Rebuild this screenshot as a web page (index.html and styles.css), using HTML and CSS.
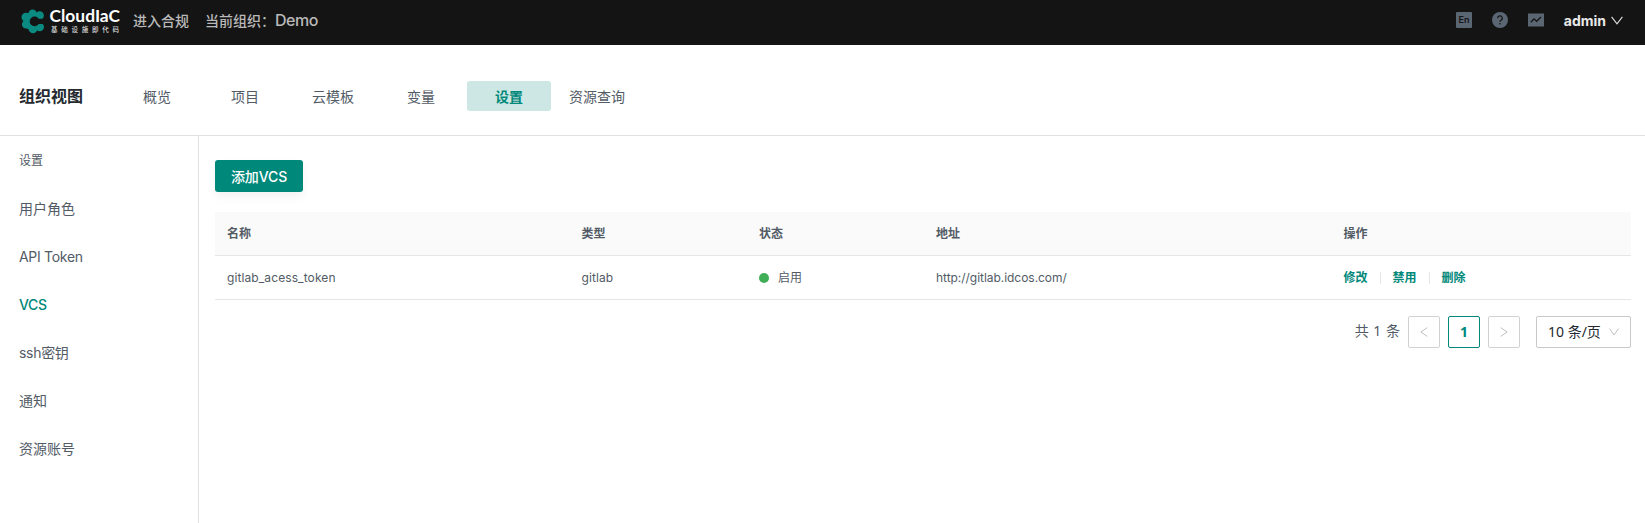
FILE: index.html
```html
<!DOCTYPE html>
<html lang="zh-CN">
<head>
<meta charset="utf-8">
<title>CloudIaC</title>
<link rel="stylesheet" href="styles.css">
</head>
<body>
<header class="topbar">
  <svg class="logo" width="102" height="28" viewBox="0 0 102 28">
    <g fill="#0a8a80"><circle cx="12" cy="14.4" r="9.4"/><circle cx="11.6" cy="6.6" r="4.2"/><circle cx="4.9" cy="10.2" r="4.4"/><circle cx="5.1" cy="17.4" r="4.2"/><circle cx="12" cy="22" r="4.3"/><circle cx="18.6" cy="8.6" r="4.3"/><circle cx="18.7" cy="20" r="4.3"/></g>
    <circle cx="13.6" cy="14.4" r="4.9" fill="#141414"/>
    <path d="M15 11.8h10v5.2H15z" fill="#141414"/>
    <text class="logo-name" x="28.5" y="15.2" textLength="70.5" lengthAdjust="spacingAndGlyphs">CloudIaC</text>
    <text class="logo-sub" x="30" y="25" textLength="68">基础设施即代码</text>
  </svg>
  <a class="top-link">进入合规</a>
  <div class="top-org">当前组织：<span class="org-name">Demo</span></div>
  <div class="top-tools">
    <svg width="16" height="16" viewBox="0 0 16 16"><rect width="16" height="16" rx="1" fill="#5a6672"/><text class="en" x="8" y="11.3" text-anchor="middle">En</text></svg>
    <svg width="16" height="16" viewBox="0 0 16 16"><circle cx="8" cy="8" r="8" fill="#5a6672"/><path d="M5.7 6.3A2.3 2.3 0 1 1 9 8.2Q8 8.7 8 9.8" fill="none" stroke="#141414" stroke-width="1.2"/><circle cx="8" cy="11.8" r=".8" fill="#141414"/></svg>
    <svg width="16" height="16" viewBox="0 0 16 16"><path fill="#5a6672" d="M0 1.5h16v13H0z"/><path d="M2.8 10.2 6 6.8 8.6 9.3 13 5" fill="none" stroke="#141414" stroke-width="1.3"/></svg>
    <div class="user">admin<svg width="12" height="9" viewBox="0 0 12 9"><path d="M.6.8 6 7.8 11.4.8" fill="none" stroke="#e0e0e0" stroke-width="1.1"/></svg></div>
  </div>
</header>
<nav class="nav">
  <h1 class="nav-title">组织视图</h1>
  <a class="nav-item">概览</a>
  <a class="nav-item">项目</a>
  <a class="nav-item">云模板</a>
  <a class="nav-item">变量</a>
  <a class="nav-item active">设置</a>
  <a class="nav-item">资源查询</a>
</nav>
<div class="body">
  <aside class="side">
    <div class="side-title">设置</div>
    <a class="side-item">用户角色</a>
    <a class="side-item latin">API Token</a>
    <a class="side-item active">VCS</a>
    <a class="side-item latin">ssh密钥</a>
    <a class="side-item">通知</a>
    <a class="side-item">资源账号</a>
  </aside>
  <main class="main">
    <button class="add">添加VCS</button>
    <div class="table">
      <div class="row head"><div>名称</div><div>类型</div><div>状态</div><div>地址</div><div>操作</div></div>
      <div class="row">
        <div class="name">gitlab_acess_token</div><div class="name">gitlab</div>
        <div class="status"><i class="dot"></i>启用</div>
        <div class="url">http://gitlab.idcos.com/</div>
        <div class="actions"><a>修改</a><i class="sep"></i><a>禁用</a><i class="sep"></i><a>删除</a></div>
      </div>
    </div>
    <div class="pager">
      <span class="total">共 1 条</span>
      <span class="page"><svg width="8" height="10" viewBox="0 0 8 10"><path d="M7.3.6.9 5l6.4 4.4" fill="none" stroke="#bfbfbf"/></svg></span>
      <span class="page current">1</span>
      <span class="page"><svg width="8" height="10" viewBox="0 0 8 10"><path d="M.7.6 7.1 5 .7 9.4" fill="none" stroke="#bfbfbf"/></svg></span>
      <span class="size">10 条/页<svg width="10" height="8" viewBox="0 0 10 8"><path d="M.5.6 5 7 9.5.6" fill="none" stroke="#bfbfbf"/></svg></span>
    </div>
  </main>
</div>
</body>
</html>
```
FILE: styles.css
```css
* { box-sizing: border-box; }
body {
  margin: 0;
  height: 523px;
  display: flex;
  flex-direction: column;
  background: #fff;
  color: #525b66;
  font: 14px/22px Inter, "Noto Sans CJK SC", sans-serif;
  overflow: hidden;
}
svg { display: block; flex: none; overflow: visible; }
.topbar {
  height: 45px;
  flex: none;
  display: flex;
  align-items: center;
  padding: 0 22px 4px 21px;
  background: #141414;
  color: #b9b9b9;
  font-weight: 500;
}
.logo-name { font: 700 17px Lato, sans-serif; fill: #fff; }
.logo-sub { font: 500 6.5px "Noto Sans CJK SC", sans-serif; fill: #ddd; }
.en { font: 600 9px Inter, sans-serif; fill: #141414; }
.top-link { margin-left: 10px; }
.top-org { display: flex; margin-left: 16px; }
.org-name { font-size: 16px; font-weight: 500; letter-spacing: -.5px; line-height: 21px; }
.top-tools { display: flex; align-items: center; gap: 20px; margin-left: auto; }
.top-tools > svg { margin-bottom: 1px; }
.user { display: flex; align-items: center; gap: 5px; color: #e8e8e8; font-weight: 700; }
.nav {
  height: 91px;
  flex: none;
  display: flex;
  align-items: center;
  gap: 4px;
  padding: 11px 0 0 19px;
  border-bottom: 1px solid #e1e1e1;
}
.nav-title { margin: 0 28px 0 0; width: 64px; color: #24292f; font-size: 16px; font-weight: 700; }
.nav-item { width: 84px; height: 30px; line-height: 32px; border-radius: 3px; text-align: center; }
.nav-item.active { background: #cde7e4; color: #00887a; font-weight: 700; }
.body { flex: 1; display: flex; }
.side { width: 199px; padding: 14px 0 0 19px; border-right: 1px solid #e1e1e1; }
.side-title { font-size: 12px; line-height: 21px; }
.side-item { display: block; height: 48px; line-height: 48px; }
.side-title + .side-item { margin-top: 14px; }
.side-item.active { color: #00887a; font-weight: 500; letter-spacing: -.4px; }
.latin { letter-spacing: -.3px; }
.main { flex: 1; padding: 24px 14px 0 16px; }
.add {
  display: block;
  width: 88px;
  height: 32px;
  padding: 1px 0 0;
  border: 0;
  border-radius: 3px;
  background: #00887a;
  box-shadow: 0 5px 10px rgba(0, 0, 0, .05);
  color: #fff;
  font: 500 14px/31px Inter, "Noto Sans CJK SC", sans-serif;
  letter-spacing: -.1px;
}
.table { margin-top: 20px; font-size: 12px; }
.row {
  display: grid;
  grid-template-columns: 354.5px 177.5px 177px 407.5px 1fr;
  height: 44px;
  align-items: center;
  border-bottom: 1px solid #e6e6e6;
}
.row > div { padding-left: 12px; }
.head { background: #fafafa; font-weight: 700; }
.name { letter-spacing: .1px; }
.url { letter-spacing: -.04px; }
.status { display: flex; align-items: center; gap: 9px; }
.dot { width: 10px; height: 10px; border-radius: 50%; background: #3fae56; }
.actions { display: flex; align-items: center; color: #00887a; font-weight: 700; }
.sep { width: 1px; height: 12px; margin: 0 12px; background: #e6e6e6; }
.pager { display: flex; align-items: center; justify-content: flex-end; gap: 8px; margin-top: 16px; }
.total, .size { font-family: "Noto Sans", "Noto Sans CJK SC", sans-serif; }
.total { margin-top: -2px; word-spacing: 1px; }
.page {
  width: 32px;
  height: 32px;
  display: flex;
  align-items: center;
  justify-content: center;
  border: 1px solid #d2d2d2;
  border-radius: 2px;
}
.current { border-color: #00887a; color: #00887a; font-weight: 700; font-family: "Noto Sans", sans-serif; }
.size {
  width: 95px;
  height: 32px;
  display: flex;
  align-items: center;
  justify-content: space-between;
  margin-left: 8px;
  padding: 0 11px 0 11px;
  border: 1px solid #c9c9c9;
  border-radius: 2px;
  color: #24292f;
}
```
